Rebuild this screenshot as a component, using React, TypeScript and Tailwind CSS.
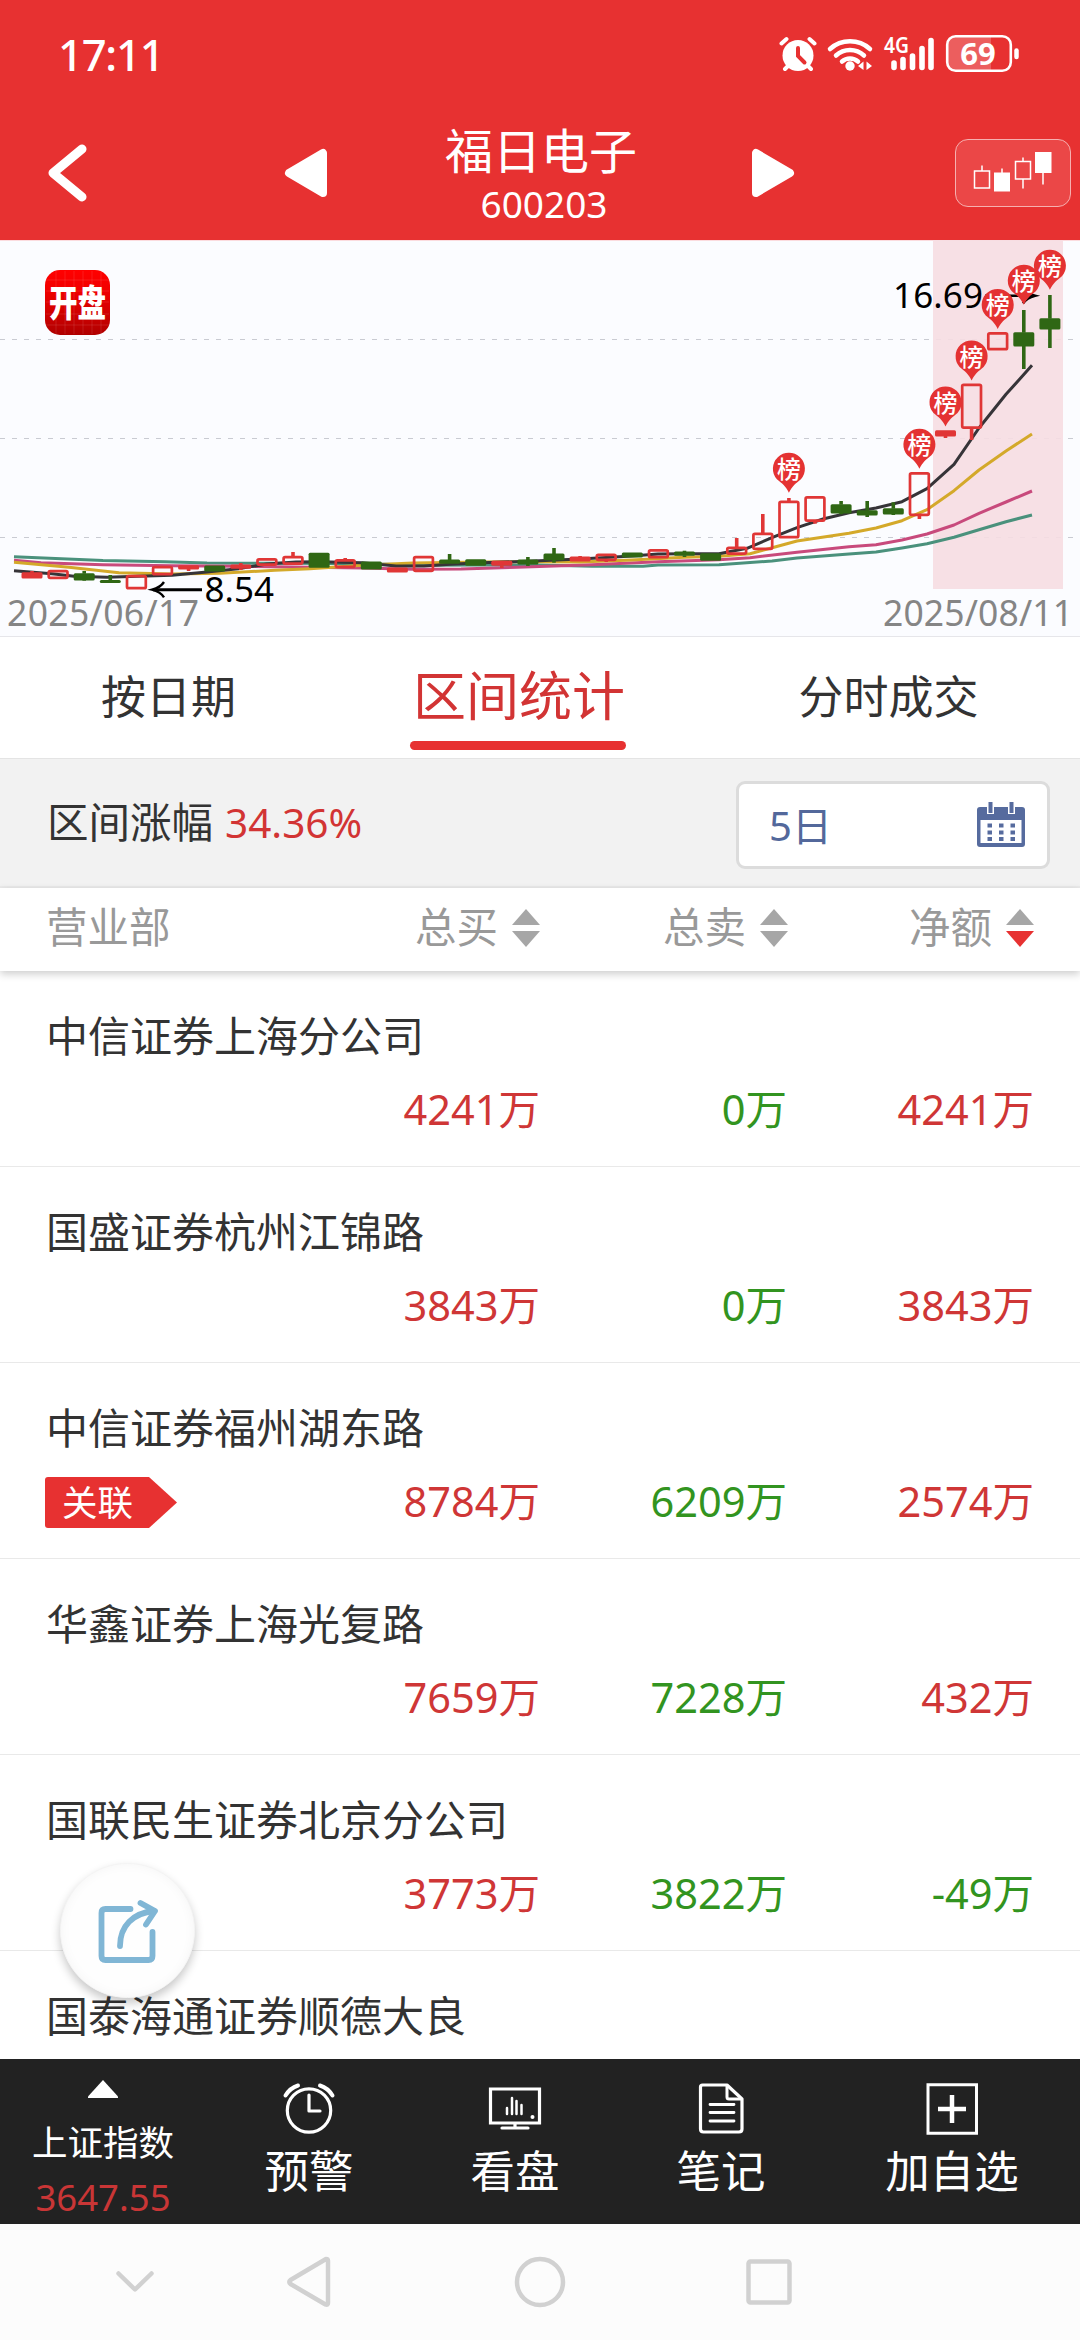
import React from "react";

type Candle = {
  kind: "hollow" | "red" | "green";
  top: number;
  bottom: number;
  high?: number;
  low?: number;
};

const candles: Candle[] = [
  { kind: "red", top: 332.7, bottom: 338, high: 331 },
  { kind: "hollow", top: 331, bottom: 338, low: 339 },
  { kind: "green", top: 333.7, bottom: 340, high: 331, low: 340.7 },
  { kind: "green", top: 340.6, bottom: 342.6, high: 335 },
  { kind: "hollow", top: 336, bottom: 348.3 },
  { kind: "hollow", top: 327, bottom: 334.3 },
  { kind: "red", top: 325.7, bottom: 329, low: 331 },
  { kind: "green", top: 326, bottom: 331 },
  { kind: "red", top: 325, bottom: 328.3, high: 323, low: 330 },
  { kind: "hollow", top: 319.3, bottom: 324.7, high: 318 },
  { kind: "hollow", top: 317, bottom: 323.7, high: 312 },
  { kind: "green", top: 313.3, bottom: 327.3 },
  { kind: "hollow", top: 320.3, bottom: 327, high: 318 },
  { kind: "green", top: 322, bottom: 329 },
  { kind: "red", top: 328, bottom: 332 },
  { kind: "hollow", top: 317, bottom: 331 },
  { kind: "green", top: 320, bottom: 323.3, high: 314 },
  { kind: "green", top: 319.7, bottom: 325.3 },
  { kind: "red", top: 321.3, bottom: 325.3, low: 328 },
  { kind: "green", top: 320, bottom: 324, high: 317, low: 326 },
  { kind: "green", top: 314, bottom: 319.7, high: 308, low: 322.7 },
  { kind: "red", top: 317, bottom: 321, high: 316 },
  { kind: "hollow", top: 314.7, bottom: 320, low: 322 },
  { kind: "green", top: 313, bottom: 317 },
  { kind: "hollow", top: 310.3, bottom: 317.3 },
  { kind: "green", top: 312, bottom: 315.3, high: 310.7, low: 317 },
  { kind: "green", top: 313.7, bottom: 320.3 },
  { kind: "hollow", top: 307.7, bottom: 313.7, high: 298 },
  { kind: "hollow", top: 293.7, bottom: 309, high: 274 },
  { kind: "hollow", top: 261.7, bottom: 297.3, high: 258 },
  { kind: "hollow", top: 257.3, bottom: 280.7, low: 283.7 },
  { kind: "green", top: 264.7, bottom: 273, high: 261, low: 274.3 },
  { kind: "green", top: 270.7, bottom: 275, high: 261, low: 277 },
  { kind: "green", top: 268.7, bottom: 274, high: 262.3, low: 275 },
  { kind: "hollow", top: 233.3, bottom: 275, low: 279 },
  { kind: "red", top: 190.7, bottom: 196, low: 198 },
  { kind: "hollow", top: 144.7, bottom: 187.7, low: 200 },
  { kind: "hollow", top: 93.3, bottom: 109.3 },
  { kind: "green", top: 92.7, bottom: 106, high: 70, low: 129 },
  { kind: "green", top: 78.7, bottom: 89, high: 55, low: 108 },
];

const pins = [
  { index: 29, top: 213.3 },
  { index: 34, top: 189.3 },
  { index: 35, top: 147 },
  { index: 36, top: 101 },
  { index: 37, top: 49.5 },
  { index: 38, top: 25.3 },
  { index: 39, top: 10.3 },
];

const averages = [
  {
    color: "#4a917c",
    points:
      "14,316.7 103,320.5 165,321.7 207,323 293,323.3 362,323.7 430,325.3 482,325 540,325 592,326.3 643,326.3 658,325 719,324.7 772,321 797,318 849,314 876,312 902,308 927,303.7 954,297.3 979,289.7 1006,281.7 1032,275",
  },
  {
    color: "#c84a7c",
    points:
      "14,320.3 41,322.7 103,324.7 172,325.7 241,326.3 293,327 362,328 413,329.3 461,329 517,327.3 592,324.7 658,321.7 719,319.7 750,317.7 797,312.3 849,306.7 876,304.7 902,300 927,294 954,285 979,273.3 1006,262 1032,251",
  },
  {
    color: "#d4a92a",
    points:
      "14,322.3 69,327.3 119,332.7 172,334 220,333.3 275,330.3 310,328.7 362,325.3 413,323 482,322 540,321.7 580,322 632,320 684,317.3 719,316.3 750,313.7 774,307.3 797,301 849,293.3 876,288 902,280.7 927,269.7 954,250.7 979,230 1006,211 1032,194",
  },
  {
    color: "#363438",
    points:
      "14,330.7 52,333.7 74,336.3 107,337.3 138,336.3 172,335.3 207,332 238,328.7 267,324 296,322 320,321.7 362,322.7 396,326 424,326 450,324.3 482,322.7 528,321.3 580,319 632,316 658,314 684,313.7 719,313.7 747,308.3 772,297.7 797,287.7 823,279 849,272.7 876,268 902,261.7 927,248.7 954,224.3 979,188 1006,154.3 1032,125.3",
  },
];

const rows = [
  { name: "中信证券上海分公司", buy: "4241万", sell: "0万", net: "4241万" },
  { name: "国盛证券杭州江锦路", buy: "3843万", sell: "0万", net: "3843万" },
  { name: "中信证券福州湖东路", buy: "8784万", sell: "6209万", net: "2574万", tag: "关联" },
  { name: "华鑫证券上海光复路", buy: "7659万", sell: "7228万", net: "432万" },
  { name: "国联民生证券北京分公司", buy: "3773万", sell: "3822万", net: "-49万" },
  { name: "国泰海通证券顺德大良", buy: "", sell: "", net: "" },
];

function StatusBar() {
  return (
    <div className="flex h-[106px] items-center justify-between pl-[58px] pr-[61px] pt-[2px]">
      <span className="text-[43.5px] font-medium leading-[60px] tracking-[-1.2px]">17:11</span>
      <svg width="240" height="60" viewBox="778 24 240 60" fill="none" stroke="#fff" strokeLinecap="round">
        <circle cx="797" cy="55.500" r="15.500" fill="#fff" stroke="none" />
        <path d="M780.500 43.500l5-4.500M813.500 43.500l-5-4.500M787 66l-3 3M807 66l3 3" strokeWidth="4" />
        <path d="M797 48v8l6.500 6.500" stroke="#e73131" strokeWidth="4" />
        <path d="M829 49a30 30 0 0 1 40 0M835 55.500a20.500 20.500 0 0 1 28 0M841 61.500a12 12 0 0 1 16 0" strokeWidth="4.500" />
        <circle cx="849" cy="66" r="4.700" fill="#fff" stroke="none" />
        <path d="M862.500 61.500v8.500l-5.500-4zM865.500 61.500v8.500l5.500-4z" fill="#fff" stroke="none" />
        <text x="883" y="53" fontSize="22" fontWeight="600" fill="#fff" stroke="none" textLength="25" lengthAdjust="spacingAndGlyphs">4G</text>
        <path d="M893 63v4.500M902 59.500v8M911.500 56v11.500M921 48.500v19M930 40.500v27" strokeWidth="5.600" />
        <path d="M955 37h35v34h-35q-8 0-8-8V45q0-8 8-8z" fill="#fff" fillOpacity=".22" stroke="none" />
        <rect x="946.200" y="36.200" width="63.600" height="34.600" rx="8.500" strokeWidth="2.600" />
        <path d="M1015.500 50.500v6.500" strokeWidth="4.500" />
        <text x="977" y="65" fontSize="31" fontWeight="700" fill="#fff" stroke="none" textAnchor="middle">69</text>
      </svg>
    </div>
  );
}

function Header() {
  return (
    <header className="h-[240px] shrink-0 bg-[#e73131] text-white">
      <StatusBar />
      <div className="flex h-[134px] items-center">
        <svg className="ml-[46px] shrink-0" width="42" height="60" viewBox="0 0 42 60" fill="none" stroke="#fff" strokeWidth="9" strokeLinecap="round" strokeLinejoin="round">
          <path d="M36 6L7 30l29 24" />
        </svg>
        <svg className="ml-[195px] shrink-0" width="46" height="52" viewBox="0 0 46 52" fill="#fff" stroke="#fff" strokeWidth="8" strokeLinejoin="round">
          <path d="M40 6v40L6 26z" />
        </svg>
        <div className="ml-[117px] flex w-[190px] shrink-0 flex-col items-center pt-[8px]">
          <h1 className="whitespace-nowrap font-['Roboto','Noto_Sans_CJK_SC',sans-serif] text-[48px] leading-[54px]">福日电子</h1>
          <p className="text-[37px] leading-[48px] pl-[6px]">600203</p>
        </div>
        <svg className="ml-[114px] shrink-0" width="46" height="52" viewBox="0 0 46 52" fill="#fff" stroke="#fff" strokeWidth="8" strokeLinejoin="round">
          <path d="M6 6v40l34-20z" />
        </svg>
        <div className="ml-[159px] h-[68px] w-[116px] shrink-0 rounded-[13px] border-[1.5px] border-[#f6b0b0] bg-[#eb4747]">
          <svg width="113" height="65" viewBox="956 140.500 113 65" fill="none" stroke="#fff" strokeWidth="1.500">
            <path d="M974.500 171.500h15v17h-15zM982 166v5.500M1015.500 162h15v17.500h-15zM1023 158v4M1023 179.500v9.500M1002 169v5M1043 173v12" />
            <path d="M994 173h16v19h-16zM1035 152.500h16.500v21H1035z" fill="#fff" stroke="none" />
          </svg>
        </div>
      </div>
    </header>
  );
}

function CandleShape({ candle, x }: { candle: Candle; x: number }) {
  const color = candle.kind === "green" ? "#2f6714" : "#e03636";
  const hollow = candle.kind === "hollow";
  const inset = hollow ? 1.1 : 0;
  return (
    <g>
      {candle.high !== undefined && <path d={`M${x} ${candle.high}V${candle.top}`} stroke={color} strokeWidth="3.600" />}
      {candle.low !== undefined && <path d={`M${x} ${candle.bottom}V${candle.low}`} stroke={color} strokeWidth="3.600" />}
      <rect
        x={x - 10.5 + inset}
        y={candle.top - 0.5 + inset * 0.6}
        width={21 - inset * 2}
        height={candle.bottom - candle.top + 1 - inset * 1.2}
        rx="1.500"
        fill={hollow ? "none" : color}
        stroke={hollow ? color : "none"}
        strokeWidth="2.700"
      />
    </g>
  );
}

function Chart() {
  const centre = (index: number) => 32 + index * 26.1;
  return (
    <section className="h-[397px] shrink-0 border-b border-[#e6e6ea] bg-[#fbfcff]">
      <svg width="1080" height="396" viewBox="0 0 1080 396" fill="none">
        <defs>
          <linearGradient id="logo" x1="0" y1="0" x2="0" y2="1">
            <stop offset="0" stopColor="#ff0000" />
            <stop offset=".3" stopColor="#f20000" />
            <stop offset="1" stopColor="#b00000" />
          </linearGradient>
        </defs>
        <path d="M0 .5h1080" stroke="#fbdcdf" />
        <path d="M0 99.500h1075M0 198.500h1075M0 297.500h1075" stroke="#c9cbd2" strokeWidth="1" strokeDasharray="5 7" />
        <rect x="933" y="0" width="130" height="349" fill="#f6dde2" fillOpacity=".9" />
        <rect x="45" y="30" width="65" height="65" rx="15" fill="url(#logo)" />
        <path d="M56 31v63M65 31v63M74 31v63M83 31v63M92 31v63M101 31v63M46 40h63M46 51h63M46 62h63M46 74h63M46 85h63" stroke="#fff" strokeOpacity=".1" />
        <text x="77.500" y="76.500" fontSize="37" fontWeight="900" fill="#fff" textAnchor="middle" textLength="57" lengthAdjust="spacingAndGlyphs">开盘</text>
        {averages.map((line) => (
          <polyline key={line.color} points={line.points} stroke={line.color} strokeWidth="3" strokeLinejoin="round" />
        ))}
        {candles.map((candle, i) => (
          <CandleShape key={i} candle={candle} x={centre(i)} />
        ))}
        <path d="M153 349.700h49" stroke="#000" strokeWidth="3" />
        <path d="M164 342q-3.500 5.500-12 7.700q8.500 2.200 12 7.700" stroke="#000" strokeWidth="2.400" />
        <path d="M985 55.700h49M1023 48q3.500 5.500 12 7.700q-8.500 2.200-12 7.700" stroke="#000" strokeWidth="2.600" />
        <text x="204.500" y="361.500" fontSize="35" fill="#000">8.54</text>
        <text x="893" y="68" fontSize="35" fill="#000" textLength="90">16.69</text>
        {pins.map((pin) => (
          <g key={pin.index} transform={`translate(${centre(pin.index)} ${pin.top})`}>
            <path d="M0 39.500C-3 33-7 30-12 26A16 16 0 1 1 12 26C7 30 3 33 0 39.500z" fill="#e43232" />
            <text x="0" y="24.500" fontSize="24" fontWeight="500" fill="#fff" textAnchor="middle">榜</text>
          </g>
        ))}
        <text x="7" y="386" fontSize="35.500" fill="#858585" textLength="192">2025/06/17</text>
        <text x="883" y="386" fontSize="35.500" fill="#858585" textLength="190">2025/08/11</text>
      </svg>
    </section>
  );
}

function Tabs() {
  return (
    <nav className="flex h-[122px] shrink-0 border-b border-[#e4e4e4] bg-white text-[45px] text-[#333]">
      <div className="flex w-[337px] items-center justify-center pb-px">按日期</div>
      <div className="flex w-[362px] flex-col items-center text-[53px] text-[#d23434]">
        <span className="mt-[23px] h-[72px] pl-[2px] leading-[72px]">区间统计</span>
        <span className="mt-[9px] h-[9px] w-[216px] rounded-full bg-[#e73131]" />
      </div>
      <div className="flex flex-1 items-center justify-center pb-px pr-[2px]">分时成交</div>
    </nav>
  );
}

function RangeBar() {
  return (
    <section className="flex h-[129px] shrink-0 items-center justify-between border-b-2 border-[#ebebeb] bg-[#f2f2f2] pl-[47px] pr-[30px] pt-[5px]">
      <p className="pb-[5px] text-[41.5px] leading-[60px] text-[#333]">
        区间涨幅<span className="ml-[12px] text-[40.5px] text-[#d23434]">34.36%</span>
      </p>
      <div className="flex h-[88px] w-[314px] items-center justify-between rounded-[9px] border-[3px] border-[#dcdcdc] bg-white pl-[30px] pr-[21px]">
        <span className="pt-[1px] text-[40px] leading-none text-[#53689b]">5日</span>
        <svg width="50" height="46" viewBox="0 0 50 46">
          <path d="M4 5h42q3 0 3 3v34q0 3-3 3H4q-3 0-3-3V8q0-3 3-3z" fill="#566b9e" />
          <path d="M4.500 18h41v23h-41z" fill="#fff" />
          <path d="M11 0h7v12h-7zM32 0h7v12h-7z" fill="#fff" />
          <path d="M12.500 0h4v11h-4zM33.500 0h4v11h-4z" fill="#566b9e" />
          <path d="M11.500 23.500h29M11.500 30.500h29M11.500 37h29" stroke="#566b9e" strokeWidth="4" strokeDasharray="4.500 7" />
        </svg>
      </div>
    </section>
  );
}

function SortHead({ label, active, className }: { label: string; active?: boolean; className: string }) {
  return (
    <div className={`flex items-center justify-end ${className}`}>
      <span>{label}</span>
      <svg className="ml-[14px] mt-px" width="28" height="38" viewBox="0 0 28 38">
        <path d="M14 0l14 16H0z" fill="#a6a6a6" />
        <path d="M14 38l14-16H0z" fill={active ? "#e73131" : "#a6a6a6"} />
      </svg>
    </div>
  );
}

function TableHead() {
  return (
    <div className="relative flex h-[83px] shrink-0 items-center bg-white pb-[5px] text-[41.5px] text-[#999] shadow-[0_3px_8px_rgba(0,0,0,0.2)]">
      <span className="ml-[46px] w-[154px]">营业部</span>
      <SortHead label="总买" className="w-[340px]" />
      <SortHead label="总卖" className="w-[248px]" />
      <SortHead label="净额" active className="w-[246px]" />
    </div>
  );
}

function Row({ row }: { row: (typeof rows)[number] }) {
  const netColor = row.net.startsWith("-") ? "text-[#329420]" : "text-[#cf3636]";
  return (
    <li className="h-[196px] shrink-0 border-b-[1.5px] border-[#e9e9e9] bg-white pl-[45px] pt-[35px]">
      <p className="pl-px text-[42px] leading-[60px] text-[#333]">{row.name}</p>
      <div className="mt-[13px] flex h-[60px] items-center text-[41.5px] leading-[60px]">
        <div className="w-[155px]">
          {row.tag && (
            <div className="relative mt-[3px] flex h-[51px] w-[132px] items-center">
              <svg className="absolute inset-0" width="132" height="51" viewBox="0 0 132 51">
                <path d="M3 0h101l28 25.500L104 51H3q-3 0-3-3V3q0-3 3-3z" fill="#e73131" />
              </svg>
              <span className="relative pb-[2px] pl-[17px] text-[35.5px] leading-[48px] text-white">{row.tag}</span>
            </div>
          )}
        </div>
        <span className="w-[340px] text-right text-[#cf3636]">{row.buy}</span>
        <span className="w-[247px] text-right text-[#329420]">{row.sell}</span>
        <span className={`w-[247px] text-right ${netColor}`}>{row.net}</span>
      </div>
    </li>
  );
}

function ShareButton() {
  return (
    <button className="absolute left-[60px] top-[1863px] flex size-[135px] items-center justify-center rounded-full border-[1.5px] border-[#f4f4f4] bg-[#fefefe] shadow-[0_5px_10px_rgba(0,0,0,0.22),inset_0_0_12px_rgba(0,0,0,0.04)]">
      <svg width="64" height="70" viewBox="95.500 1896 64 70" fill="none" stroke="#80b6d5" strokeWidth="5.800" strokeLinecap="round" strokeLinejoin="round">
        <path d="M130 1909h-25q-4 0-4 4v43q0 4 4 4h43q4 0 4-4v-24" />
        <path d="M119.500 1946c0-20 13-33 34-35" />
        <path d="M140 1903l14.500 8-9 13.500" />
      </svg>
    </button>
  );
}

function ToolItem({ label, className, children }: { label: string; className: string; children: React.ReactNode }) {
  return (
    <div className={`flex flex-col items-center ${className}`}>
      <svg className="mt-[23px]" width="54" height="54" viewBox="0 0 54 54" fill="none" stroke="#fff" strokeWidth="3.200" strokeLinecap="round" strokeLinejoin="round">
        {children}
      </svg>
      <span className="mt-[7px] text-[44.5px] leading-[56px]">{label}</span>
    </div>
  );
}

function Toolbar() {
  return (
    <nav className="relative flex h-[165px] shrink-0 bg-[#222] text-white">
      <div className="flex w-[206px] flex-col items-center">
        <svg className="mt-[21px]" width="30" height="18" viewBox="0 0 30 18">
          <path d="M15 0l15 16.500v1.500H0v-1.500z" fill="#fff" />
        </svg>
        <span className="mt-[20px] text-[35.5px] leading-[48px]">上证指数</span>
        <span className="mt-[7px] text-[36.5px] leading-[48px] text-[#c93636]">3647.55</span>
      </div>
      <ToolItem label="预警" className="w-[206px]">
        <circle cx="27" cy="28.500" r="21.700" />
        <path d="M27 13v16h11" />
        <path d="M3.500 13.500Q8 6 16 3.500M50.500 13.500Q46 6 38 3.500" strokeWidth="4" />
      </ToolItem>
      <ToolItem label="看盘" className="w-[206px]">
        <path d="M2.500 7h49v34h-49zM27 41v5M14 46h26" strokeLinejoin="miter" />
        <path d="M19 26v6M24 16v16M28.500 19v13M33.500 23v9" strokeWidth="2.500" />
        <circle cx="44.500" cy="35" r="2" fill="#fff" stroke="none" />
      </ToolItem>
      <ToolItem label="笔记" className="w-[206px]">
        <path d="M8.500 3H33l15 14v30q0 3-3 3H9.500q-3 0-3-3V5q0-2 2-2z" />
        <path d="M33 4v11q0 2 2 2h12" strokeWidth="3" />
        <path d="M16 22.500h24M16 30.500h24M16 39h24" strokeWidth="2.800" />
      </ToolItem>
      <ToolItem label="加自选" className="w-[256px]">
        <path d="M3 2.700h48.500v48.500H3z" strokeWidth="3" strokeLinejoin="miter" />
        <path d="M27 13v28M13 27h28" strokeWidth="4.500" strokeLinecap="butt" />
      </ToolItem>
    </nav>
  );
}

function SystemNav() {
  return (
    <div className="flex h-[116px] shrink-0 items-center bg-[#fcfcfc]">
      <svg width="1080" height="116" viewBox="0 2224 1080 116" fill="none" stroke="#d1d1d1" strokeWidth="4.500" strokeLinecap="round" strokeLinejoin="round">
        <path d="M118.500 2273.500l16.500 16 16.500-16" />
        <path d="M326 2259q2 0 2 2v42q0 2.500-2.500 1.500l-35-20.500q-2.500-2 0-4z" />
        <circle cx="540" cy="2282" r="23" />
        <rect x="748.500" y="2261.500" width="41" height="41" rx="2" />
      </svg>
    </div>
  );
}

export default function App() {
  return (
    <main className="relative flex h-[2340px] w-[1080px] flex-col overflow-hidden bg-white font-['Noto_Sans','Noto_Sans_CJK_SC',sans-serif]">
      <Header />
      <Chart />
      <Tabs />
      <RangeBar />
      <TableHead />
      <ul className="flex min-h-0 flex-1 flex-col overflow-hidden">
        {rows.map((row) => (
          <Row key={row.name} row={row} />
        ))}
      </ul>
      <ShareButton />
      <Toolbar />
      <SystemNav />
    </main>
  );
}
